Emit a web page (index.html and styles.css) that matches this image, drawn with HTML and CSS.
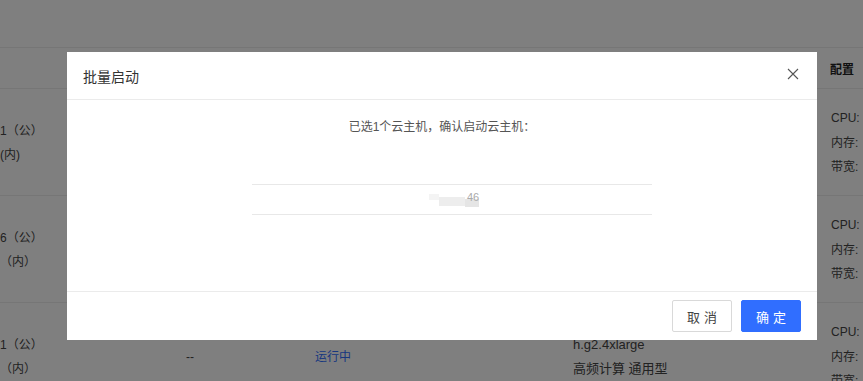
FILE: index.html
```html
<!DOCTYPE html>
<html lang="zh-CN">
<head>
<meta charset="utf-8">
<title>批量启动</title>
<link rel="stylesheet" href="styles.css">
</head>
<body>
<div class="page">
  <div class="topbar"></div>
  <div class="row thead">
    <div class="c1"></div>
    <div class="c2">IP</div>
    <div class="c3">状态</div>
    <div class="c4">规格</div>
    <div class="c5 th">配置</div>
  </div>
  <div class="row tr">
    <div class="c1"><div>1（公）</div><div>(内)</div></div>
    <div class="c2">--</div>
    <div class="c3"><span class="status">运行中</span></div>
    <div class="c4"><div>h.g2.4xlarge</div><div>高频计算 通用型</div></div>
    <div class="c5"><div>CPU:</div><div>内存:</div><div>带宽:</div></div>
  </div>
  <div class="row tr">
    <div class="c1"><div>6（公）</div><div>（内）</div></div>
    <div class="c2">--</div>
    <div class="c3"><span class="status">运行中</span></div>
    <div class="c4"><div>h.g2.4xlarge</div><div>高频计算 通用型</div></div>
    <div class="c5"><div>CPU:</div><div>内存:</div><div>带宽:</div></div>
  </div>
  <div class="row tr">
    <div class="c1"><div>1（公）</div><div>（内）</div></div>
    <div class="c2">--</div>
    <div class="c3"><span class="status">运行中</span></div>
    <div class="c4"><div>h.g2.4xlarge</div><div>高频计算 通用型</div></div>
    <div class="c5"><div>CPU:</div><div>内存:</div><div>带宽:</div></div>
  </div>
</div>

<div class="mask"></div>

<div class="modal">
  <div class="modal-header">
    <span class="modal-title">批量启动</span>
    <svg class="close" width="12" height="12" viewBox="0 0 12 12"><path d="M1 1 L11 11 M11 1 L1 11" stroke="#555" stroke-width="1.1" fill="none"/></svg>
  </div>
  <div class="modal-body">
    <p class="tip">已选1个云主机，确认启动云主机：</p>
    <div class="list">
      <div class="list-row"><span class="smear"><i class="s1"></i><i class="s2"></i><i class="s3"></i></span><span class="tail">46</span></div>
    </div>
  </div>
  <div class="modal-footer">
    <button class="btn btn-default">取消</button>
    <button class="btn btn-primary">确定</button>
  </div>
</div>
</body>
</html>
```

FILE: styles.css
```css
html, body {
  margin: 0;
  padding: 0;
  background: #fff;
  font-family: "Liberation Sans", "Noto Sans CJK SC", sans-serif;
  font-size: 12px;
  color: #444;
  overflow: hidden;
}

.page {
  width: 863px;
}

.topbar {
  height: 47px;
  border-bottom: 1px solid #ececec;
}

.row {
  display: grid;
  grid-template-columns: 130px 120px 323px 258px 1fr;
  align-items: center;
  border-bottom: 1px solid #ececec;
  box-sizing: border-box;
}

.thead {
  height: 41px;
  color: #333;
}

.thead .c1, .thead .c2, .thead .c3, .thead .c4 {
  visibility: hidden;
}

.th {
  font-weight: bold;
  color: #222;
}

.tr {
  height: 107px;
  line-height: 24.5px;
  padding-top: 2px;
}

.c1 {
  white-space: nowrap;
}

.c2 {
  text-align: center;
}

.c3 {
  padding-left: 65px;
}

.status {
  color: #306eff;
}

.c4 {
  font-size: 13px;
}

.c5 {
  white-space: nowrap;
}

.thead .c5 {
  margin-left: -1px;
}

.mask {
  position: fixed;
  inset: 0;
  background: rgba(0, 0, 0, 0.5);
}

.modal {
  position: absolute;
  left: 67px;
  top: 52px;
  width: 750px;
  height: 288px;
  background: #fff;
  display: flex;
  flex-direction: column;
}

.modal-header {
  height: 48px;
  border-bottom: 1px solid #ebebeb;
  display: flex;
  align-items: center;
  justify-content: space-between;
  padding: 0 18px 0 16px;
  box-sizing: border-box;
  flex: none;
}

.modal-title {
  font-size: 14px;
  color: #333;
}

.close {
  display: block;
  margin-top: -4px;
}

.modal-body {
  flex: 1;
  display: flex;
  flex-direction: column;
  align-items: center;
}

.tip {
  margin: 18px 0 0;
  font-size: 12px;
  line-height: 18px;
  color: #555;
}

.list {
  margin-top: 48px;
  margin-left: 20px;
  width: 400px;
  border-top: 1px solid #e8e8e8;
  border-bottom: 1px solid #e8e8e8;
}

.list-row {
  height: 29px;
  display: flex;
  align-items: center;
  justify-content: center;
}

.smear {
  display: flex;
  align-items: center;
  margin-left: 4px;
}

.smear i {
  display: block;
}

.smear .s1 {
  width: 10px;
  height: 6px;
  background: #f4f4f4;
  margin-top: -6px;
}

.smear .s2 {
  width: 26px;
  height: 9px;
  background: #ededed;
  margin-top: 4px;
}

.smear .s3 {
  width: 14px;
  height: 8px;
  background: #e5e5e5;
  margin-top: 6px;
}

.tail {
  font-size: 11px;
  color: #aaa;
  margin-left: -12px;
  margin-top: -6px;
}

.modal-footer {
  height: 49px;
  border-top: 1px solid #ebebeb;
  display: flex;
  justify-content: flex-end;
  align-items: center;
  gap: 9px;
  padding: 0 16px;
  box-sizing: border-box;
  flex: none;
}

.btn {
  width: 60px;
  height: 32px;
  font-family: "Liberation Sans", "Noto Sans CJK SC", sans-serif;
  font-size: 13px;
  letter-spacing: 4px;
  text-indent: 4px;
  border-radius: 2px;
  box-sizing: border-box;
  padding: 0;
  cursor: pointer;
}

.btn-default {
  background: #fff;
  border: 1px solid #d9d9d9;
  color: #444;
}

.btn-primary {
  background: #306eff;
  border: 1px solid #306eff;
  color: #fff;
}
```
